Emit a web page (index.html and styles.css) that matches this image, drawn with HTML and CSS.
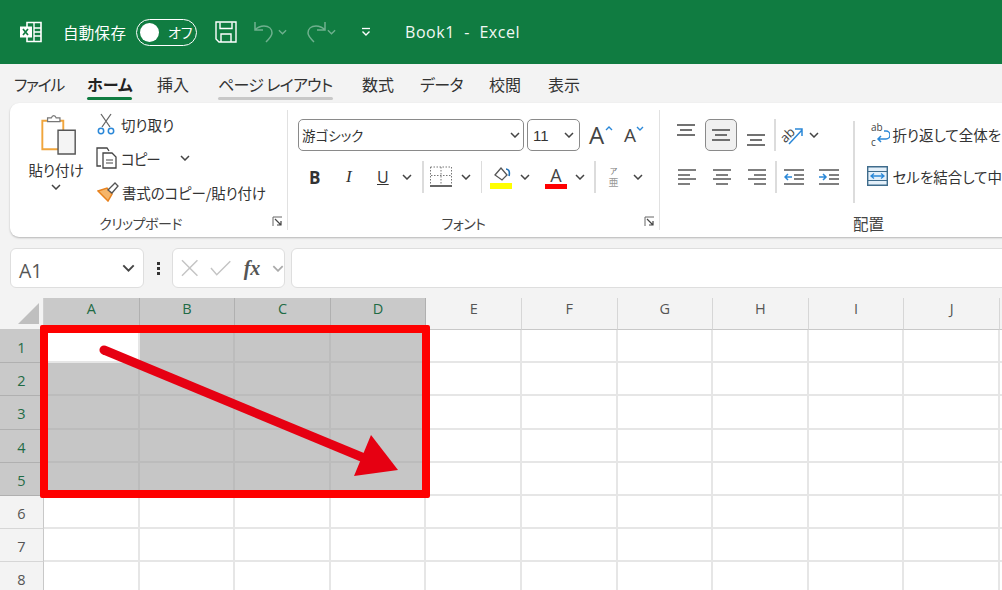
FILE: index.html
```html
<!DOCTYPE html>
<html lang="ja">
<head>
<meta charset="utf-8">
<title>Book1 - Excel</title>
<link rel="stylesheet" href="styles.css">
</head>
<body>
<svg class="defs" width="0" height="0">
  <symbol id="chev" viewBox="0 0 10 6"><path d="M1 1l4 4 4-4" fill="none" stroke="currentColor" stroke-width="1.5"/></symbol>
</svg>
<div class="app">
  <header class="titlebar">
    <svg class="xl" width="24" height="24" viewBox="0 0 24 24"><path d="M8 2.5h14v19H8z" fill="none" stroke="#fff" stroke-width="1.6"/><path d="M15 3v18M15 8h7M15 12h7M15 16h7" stroke="#fff" stroke-width="1.4"/><path d="M1 6.5h12v11H1z" fill="#fff"/><path d="M4 9l5 6M9 9l-5 6" stroke="#107c41" stroke-width="1.7"/></svg>
    <span class="autosave">自動保存</span>
    <span class="toggle"><i class="knob"></i><span>オフ</span></span>
    <svg class="save" width="22" height="22" viewBox="0 0 22 22"><path d="M1 1h20v20H4l-3-3z" fill="none" stroke="#fff" stroke-width="1.4"/><path d="M5 1.5v6h12v-6M6 21v-8h10v8" fill="none" stroke="#fff" stroke-width="1.4"/></svg>
    <svg class="undo" width="22" height="24" viewBox="0 0 22 24"><path d="M2 2v8h8M2 10c3-3 6-4 9-4 5 0 8 3 8 7 0 3-3 6-6 9" fill="none" stroke="#6fb08e" stroke-width="1.5"/></svg>
    <svg class="tchev dim"><use href="#chev"/></svg>
    <svg class="redo" width="22" height="24" viewBox="0 0 22 24"><path d="M20 2v8h-8M20 10c-3-3-6-4-9-4-5 0-8 3-8 7 0 3 3 6 6 9" fill="none" stroke="#6fb08e" stroke-width="1.5"/></svg>
    <svg class="tchev dim"><use href="#chev"/></svg>
    <svg class="qat" width="10" height="10" viewBox="0 0 10 10"><path d="M1 1.5h8" stroke="#fff" stroke-width="1.3"/><path d="M1.5 4.5l3.500 3.500 3.500-3.500" fill="none" stroke="#fff" stroke-width="1.4"/></svg>
    <span class="doc">Book1&nbsp; -&nbsp; Excel</span>
  </header>

  <nav class="tabs">
    <span class="tab t1">ファイル</span>
    <span class="tab t2 active">ホーム</span>
    <span class="tab t3">挿入</span>
    <span class="tab t4 under">ページ レイアウト</span>
    <span class="tab t5">数式</span>
    <span class="tab t6">データ</span>
    <span class="tab t7">校閲</span>
    <span class="tab t8">表示</span>
  </nav>

  <section class="ribbon">
    <div class="group clip">
      <div class="group-body clip-body">
        <div class="paste">
          <svg width="38" height="40" viewBox="0 0 38 42"><path d="M1.500 6h22v30h-22z" fill="#fff" stroke="#f0a53c" stroke-width="2"/><path d="M7 6V3h4c1-3 4-3 5 0h4v4H7z" fill="#fff" stroke="#777" stroke-width="1.300"/><path d="M18 16h18v25H18z" fill="#f4f4f4" stroke="#555" stroke-width="1.500"/></svg>
          <span class="paste-label">貼り付け</span>
          <svg class="chev"><use href="#chev"/></svg>
        </div>
        <div class="clip-rows">
          <div class="clip-row">
            <svg width="18" height="22" viewBox="0 0 18 22"><path d="M4 1l9 13M14 1L5 14" stroke="#666" stroke-width="1.300" fill="none"/><circle cx="4" cy="18" r="2.700" fill="none" stroke="#2b88d8" stroke-width="1.500"/><circle cx="14" cy="18" r="2.700" fill="none" stroke="#2b88d8" stroke-width="1.500"/></svg>
            <span>切り取り</span>
          </div>
          <div class="clip-row copy">
            <svg width="23" height="24" viewBox="0 0 23 24"><path d="M6 20H2V2h10l2 3" fill="none" stroke="#444" stroke-width="1.300"/><path d="M8 7h9l4 4v11H8z" fill="#fff" stroke="#444" stroke-width="1.300"/><path d="M11 14h7M11 17h7" stroke="#444"/></svg>
            <span>コピー</span>
            <svg class="chev"><use href="#chev"/></svg>
          </div>
          <div class="clip-row fmt">
            <svg width="22" height="20" viewBox="0 0 22 20"><path d="M1 9l9-3 5 6-4 7z" fill="#f5b56a" stroke="#e8821e" stroke-width="1.500"/><path d="M11 8l7-7 3 3-6 7z" fill="#fff" stroke="#555" stroke-width="1.300"/></svg>
            <span>書式のコピー/貼り付け</span>
          </div>
        </div>
      </div>
      <div class="group-foot"><span>クリップボード</span><svg class="launch" width="11" height="11" viewBox="0 0 11 11"><path d="M1 10V1h9" fill="none" stroke="#666"/><path d="M3 3l6 6M9 5v4H5" fill="none" stroke="#444" stroke-width="1.200"/></svg></div>
    </div>

    <div class="group font">
      <div class="group-body font-body">
        <div class="font-row1">
          <div class="select fontname"><span>游ゴシック</span><svg class="chev"><use href="#chev"/></svg></div>
          <div class="select fontsize"><span>11</span><svg class="chev"><use href="#chev"/></svg></div>
          <span class="grow">A<svg width="8" height="5" viewBox="0 0 8 5"><path d="M1 4l3-3 3 3" fill="none" stroke="#2b88d8" stroke-width="1.400"/></svg></span>
          <span class="shrink">A<svg width="8" height="5" viewBox="0 0 8 5"><path d="M1 1l3 3 3-3" fill="none" stroke="#2b88d8" stroke-width="1.400"/></svg></span>
        </div>
        <div class="font-row2">
          <b class="fb">B</b>
          <i class="fi">I</i>
          <span class="fu">U</span>
          <svg class="chev c1"><use href="#chev"/></svg>
          <span class="sep s1"></span>
          <svg class="borders" width="22" height="22" viewBox="0 0 22 22"><path d="M.5 1h21M.5 1v17M21.500 1v17M11 1v17M1 9.500h20" fill="none" stroke="#777" stroke-dasharray="1.500 1.500"/><path d="M0 20h22" stroke="#333" stroke-width="1.500"/></svg>
          <svg class="chev c2"><use href="#chev"/></svg>
          <span class="sep s2"></span>
          <svg class="fill" width="22" height="24" viewBox="0 0 22 24"><path d="M5 10l6-7 6 7-5 5z" fill="#fff" stroke="#555" stroke-width="1.300"/><path d="M16 4c3 0 4 3 3 7" fill="none" stroke="#1f6fb5" stroke-width="1.600"/><path d="M0 18h22v6H0z" fill="#ffff00"/></svg>
          <svg class="chev c3"><use href="#chev"/></svg>
          <span class="color"><span>A</span><i></i></span>
          <svg class="chev c4"><use href="#chev"/></svg>
          <span class="sep s3"></span>
          <span class="phon"><small>ア</small><em>亜</em></span>
          <svg class="chev c5"><use href="#chev"/></svg>
        </div>
      </div>
      <div class="group-foot"><span>フォント</span><svg class="launch" width="11" height="11" viewBox="0 0 11 11"><path d="M1 10V1h9" fill="none" stroke="#666"/><path d="M3 3l6 6M9 5v4H5" fill="none" stroke="#444" stroke-width="1.200"/></svg></div>
    </div>

    <div class="group align">
      <div class="group-body align-body">
        <div class="align-left">
          <div class="align-row">
            <span class="ai top"><svg width="18" height="12" viewBox="0 0 18 12"><path d="M0 1h18M3 6h12M0 11h18" stroke="#444" stroke-width="1.300"/></svg></span>
            <span class="ai mid on"><svg width="18" height="12" viewBox="0 0 18 12"><path d="M0 1h18M3 6h12M0 11h18" stroke="#444" stroke-width="1.300"/></svg></span>
            <span class="ai bot"><svg width="18" height="12" viewBox="0 0 18 12"><path d="M0 1h18M3 6h12M0 11h18" stroke="#444" stroke-width="1.300"/></svg></span>
            <span class="sep"></span>
            <span class="ai rot"><svg width="24" height="22" viewBox="0 0 24 22"><text x="0" y="15" class="rot-text" transform="rotate(-45 8 11)">ab</text><path d="M9 20L22 6M15 5h7v7" fill="none" stroke="#2b88d8" stroke-width="1.500"/></svg></span>
            <svg class="chev"><use href="#chev"/></svg>
          </div>
          <div class="align-row row2">
            <span class="ai"><svg width="18" height="16" viewBox="0 0 18 16"><path d="M0 1h18M0 6h12M0 10h18M0 15h12" stroke="#555" stroke-width="1.300"/></svg></span>
            <span class="ai"><svg width="18" height="16" viewBox="0 0 18 16"><path d="M0 1h18M3 6h12M0 10h18M3 15h12" stroke="#555" stroke-width="1.300"/></svg></span>
            <span class="ai"><svg width="18" height="16" viewBox="0 0 18 16"><path d="M0 1h18M6 6h12M0 10h18M6 15h12" stroke="#555" stroke-width="1.300"/></svg></span>
            <span class="sep"></span>
            <span class="ai"><svg width="20" height="16" viewBox="0 0 20 16"><path d="M0 1h20M10 6h10M10 10h10M0 15h20" stroke="#555" stroke-width="1.300"/><path d="M8 8H1M4 5L1 8l3 3" fill="none" stroke="#2b88d8" stroke-width="1.500"/></svg></span>
            <span class="ai"><svg width="20" height="16" viewBox="0 0 20 16"><path d="M0 1h20M10 6h10M10 10h10M0 15h20" stroke="#555" stroke-width="1.300"/><path d="M0 8h7M4 5l3 3-3 3" fill="none" stroke="#2b88d8" stroke-width="1.500"/></svg></span>
          </div>
        </div>
        <span class="vline"></span>
        <div class="wrap">
          <div class="wrap-row w1">
            <svg width="20" height="26" viewBox="0 0 20 26"><text x="1" y="10" class="ab">ab</text><text x="1" y="25" class="ab">c</text><path d="M14 10h2a3 3 0 0 1 0 8H8M11 15l-3 3 3 3" fill="none" stroke="#2b88d8" stroke-width="1.500"/></svg>
            <span>折り返して全体を</span>
          </div>
          <div class="wrap-row w2">
            <svg width="21" height="20" viewBox="0 0 21 20"><path d="M.7.700h19.600v18.600H.7z" fill="#e4f0fa" stroke="#3f6c8c" stroke-width="1.400"/><path d="M1 5.500h19M1 14.500h19" stroke="#3f6c8c"/><path d="M4 10h13M7 7.500L4 10l3 2.500M14 7.500l3 2.500-3 2.500" fill="none" stroke="#2b88d8" stroke-width="1.300"/></svg>
            <span>セルを結合して中</span>
          </div>
        </div>
      </div>
      <div class="group-foot"><span>配置</span></div>
    </div>
  </section>

  <section class="formula">
    <div class="namebox"><span>A1</span><svg class="chev"><use href="#chev"/></svg></div>
    <span class="dots"><i></i><i></i><i></i></span>
    <div class="fxbox">
      <svg width="18" height="18" viewBox="0 0 18 18"><path d="M1 1l16 16M17 1L1 17" stroke="#c4c4c4" stroke-width="1.500"/></svg>
      <svg width="22" height="16" viewBox="0 0 22 16"><path d="M1 8l6 7L21 1" fill="none" stroke="#c4c4c4" stroke-width="1.500"/></svg>
      <span class="fx">fx</span>
      <svg class="chev"><use href="#chev"/></svg>
    </div>
    <div class="input"></div>
  </section>

  <section class="sheet">
    <div class="grid">
      <div class="corner"><span></span></div>
      <div class="ch sel">A</div><div class="ch sel">B</div><div class="ch sel">C</div><div class="ch sel">D</div><div class="ch">E</div><div class="ch">F</div><div class="ch">G</div><div class="ch">H</div><div class="ch">I</div><div class="ch">J</div><div class="ch"></div>

      <div class="rh sel">1</div><div class="c"></div><div class="c s"></div><div class="c s"></div><div class="c s"></div><div class="c"></div><div class="c"></div><div class="c"></div><div class="c"></div><div class="c"></div><div class="c"></div><div class="c"></div>
      <div class="rh sel">2</div><div class="c s"></div><div class="c s"></div><div class="c s"></div><div class="c s"></div><div class="c"></div><div class="c"></div><div class="c"></div><div class="c"></div><div class="c"></div><div class="c"></div><div class="c"></div>
      <div class="rh sel">3</div><div class="c s"></div><div class="c s"></div><div class="c s"></div><div class="c s"></div><div class="c"></div><div class="c"></div><div class="c"></div><div class="c"></div><div class="c"></div><div class="c"></div><div class="c"></div>
      <div class="rh sel">4</div><div class="c s"></div><div class="c s"></div><div class="c s"></div><div class="c s"></div><div class="c"></div><div class="c"></div><div class="c"></div><div class="c"></div><div class="c"></div><div class="c"></div><div class="c"></div>
      <div class="rh sel">5</div><div class="c s"></div><div class="c s"></div><div class="c s"></div><div class="c s"></div><div class="c"></div><div class="c"></div><div class="c"></div><div class="c"></div><div class="c"></div><div class="c"></div><div class="c"></div>
      <div class="rh">6</div><div class="c"></div><div class="c"></div><div class="c"></div><div class="c"></div><div class="c"></div><div class="c"></div><div class="c"></div><div class="c"></div><div class="c"></div><div class="c"></div><div class="c"></div>
      <div class="rh">7</div><div class="c"></div><div class="c"></div><div class="c"></div><div class="c"></div><div class="c"></div><div class="c"></div><div class="c"></div><div class="c"></div><div class="c"></div><div class="c"></div><div class="c"></div>
      <div class="rh">8</div><div class="c"></div><div class="c"></div><div class="c"></div><div class="c"></div><div class="c"></div><div class="c"></div><div class="c"></div><div class="c"></div><div class="c"></div><div class="c"></div><div class="c"></div>
    </div>
    <div class="frame"></div>
    <svg class="arrow" width="1002" height="292" viewBox="0 0 1002 292"><path d="M104 52L364 160" stroke="#e60012" stroke-width="9" stroke-linecap="round"/><path d="M371 137L398 172L354 178z" fill="#e60012"/></svg>
  </section>
</div>
</body>
</html>
```
FILE: styles.css
```css
* { box-sizing: border-box; }
html, body { margin: 0; padding: 0; background: #f3f3f3; }
body { font-family: "Noto Sans CJK JP", "Noto Sans", sans-serif; color: #333; overflow: hidden; font-feature-settings: "palt"; }
.defs { position: absolute; }
.app { width: 1002px; height: 590px; overflow: hidden; display: flex; flex-direction: column; }
.chev { width: 10px; height: 6px; color: #444; flex: none; }

/* title bar */
.titlebar { height: 64px; flex: none; background: #107c41; color: #fff; display: flex; align-items: center; padding-left: 19px; }
.xl { margin-right: 20px; }
.autosave { font-size: 15.500px; letter-spacing: .3px; width: 64px; white-space: nowrap; margin-right: 9px; }
.toggle { width: 61px; height: 27px; border: 1.500px solid #fff; border-radius: 14px; display: flex; align-items: center; padding-left: 3px; font-size: 14px; gap: 9px; }
.knob { width: 19px; height: 19px; border-radius: 50%; background: #fff; flex: none; }
.save { margin-left: 18px; margin-right: 16px; }
.undo { margin-right: 3px; }
.tchev { width: 9px; height: 6px; margin-right: 18px; }
.dim { color: #6fb08e; }
.qat { margin-left: 7px; margin-right: 34px; }
.doc { font-family: "Open Sans", "Noto Sans", sans-serif; font-size: 16px; letter-spacing: .55px; color: #f2f8f4; white-space: nowrap; }

/* tabs */
.tabs { height: 39px; flex: none; display: flex; align-items: flex-start; padding: 8px 0 0 14px; font-size: 16px; color: #333; }
.tab { line-height: 24px; white-space: nowrap; position: relative; flex: none; }
.t1 { width: 73px; letter-spacing: -1.400px; }
.t2 { width: 70px; font-weight: 700; color: #222; }
.t3 { width: 61px; }
.t4 { width: 144px; letter-spacing: -.7px; }
.t5 { width: 58px; }
.t6 { width: 69px; letter-spacing: -.6px; }
.t7 { width: 59px; }
.active::after, .under::after { content: ""; position: absolute; left: 0; height: 3px; bottom: -4px; border-radius: 2px; background: #107c41; width: 45px; }
.under::after { background: #c8c8c8; left: 0; width: 115px; }

/* ribbon */
.ribbon { height: 134px; flex: none; margin-left: 10px; width: 1040px; background: #fff; border-radius: 9px 0 0 9px; box-shadow: 0 1px 2px rgba(0,0,0,.25); display: flex; font-size: 14px; padding-top: 7px; }
.group { display: flex; flex-direction: column; flex: none; height: 120px; border-right: 1.500px solid #e1e1e1; position: relative; }
.group-body { flex: 1; }
.group-foot { height: 20px; margin-bottom: -3px; font-size: 14px; letter-spacing: -.5px; color: #444; text-align: center; position: relative; line-height: 20px; white-space: nowrap; }
.launch { position: absolute; right: 4px; top: 3px; }
.clip { width: 278px; }
.font { width: 372px; }
.align { width: 400px; border-right: none; }
.clip .group-foot { padding-right: 16px; }
.font .group-foot { padding-right: 20px; }
.clip-body { display: flex; padding-left: 18px; }
.paste { width: 56px; display: flex; flex-direction: column; align-items: center; padding-top: 5px; }
.paste svg:first-child { margin-left: 5px; }
.paste-label { font-size: 14.500px; margin-top: 1px; line-height: 28px; white-space: nowrap; }
.paste .chev { margin-top: 0; }
.clip-rows { padding-left: 13px; padding-top: 2px; display: flex; flex-direction: column; gap: 10px; }
.clip-row { display: flex; align-items: center; height: 24px; gap: 6px; white-space: nowrap; font-size: 14.500px; }
.clip-row.copy { gap: 3px; margin-left: -2px; letter-spacing: -1px; }
.clip-row.copy .chev { margin-left: 17px; }
.clip-row.fmt { gap: 3px; letter-spacing: -.15px; }

.font-body { padding-left: 10px; padding-top: 9px; }
.font-row1 { display: flex; align-items: center; height: 32px; }
.select { height: 32px; border: 1px solid #8a8a8a; border-radius: 5px; display: flex; align-items: center; justify-content: space-between; padding: 0 3px; font-size: 13.500px; }
.fontname { width: 226px; margin-right: 3px; }
.fontsize { width: 53px; padding: 0 5px; font-size: 15px; font-family: "Liberation Sans", sans-serif; }
.grow, .shrink { font-family: "Open Sans", sans-serif; position: relative; color: #444; line-height: 1; }
.grow { font-size: 24px; margin-left: 9px; width: 35px; }
.shrink { font-size: 19px; }
.grow svg, .shrink svg { position: absolute; top: 3px; left: 16px; }
.shrink svg { left: 12px; top: 0; }
.font-row2 { display: flex; align-items: center; height: 32px; margin-top: 10px; position: relative; }
.fb { font: 700 17px "Open Sans", sans-serif; margin-left: 11px; width: 34px; }
.fi { font: italic 400 17px "Liberation Serif", serif; width: 33px; padding-left: 3px; }
.fu { font: 400 16px "Open Sans", sans-serif; text-decoration: underline; width: 26px; padding-left: 1px; }
.sep { width: 1.500px; height: 32px; background: #dcdcdc; flex: none; }
.c1 { margin-right: 10px; }
.s1 { margin-right: 6px; }
.c2 { margin-left: 9px; margin-right: 10px; }
.s2 { margin-right: 8px; }
.c3 { margin-left: 8px; margin-right: 15px; }
.color { width: 22px; display: flex; flex-direction: column; align-items: center; font: 400 18px/18px "Open Sans", sans-serif; color: #444; }
.color i { width: 22px; height: 5px; background: #ff0000; display: block; }
.c4 { margin-left: 8px; margin-right: 9px; }
.s3 { margin-right: 11px; }
.phon { width: 14px; display: flex; flex-direction: column; align-items: center; gap: 1px; color: #777; }
.phon small { font-size: 8px; line-height: 8px; }
.phon em { font-style: normal; font-size: 10px; line-height: 11px; color: #999; }
.c5 { margin-left: 12px; }

.align-body { display: flex; padding-left: 9px; padding-top: 8px; }
.align-left { width: 184px; }
.align-row { display: flex; align-items: center; height: 33px; }
.ai { width: 35px; display: flex; align-items: center; justify-content: center; flex: none; }
.align-row .sep { margin: 0 2px 0 1px; }
.row2 .sep { margin: 0 0 0 1px; }
.top svg { margin-bottom: 10px; }
.bot svg { margin-top: 10px; }
.mid.on { width: 32px; height: 32px; margin: 0 2px; background: #f0f0f0; border: 1.500px solid #8a8a8a; border-radius: 5px; }
.top, .bot { width: 34px; }
.rot { width: 28px; }
.align-row > .chev { margin-left: 3px; }
.rot-text { font: 400 13px "Open Sans", sans-serif; fill: #444; }
.row2 { margin-top: 9px; }
.vline { width: 1.500px; height: 82px; background: #dcdcdc; margin-top: 3px; flex: none; }
.wrap { padding-left: 12px; padding-top: 3px; }
.wrap-row { display: flex; align-items: center; gap: 5px; white-space: nowrap; height: 26px; font-size: 14.500px; }
.w1 { margin-bottom: 16px; padding-left: 3px; gap: 3px; }
.w2 { gap: 5px; }
.ab { font: 400 10px "Open Sans", sans-serif; fill: #444; }
.align .group-foot { text-align: left; padding-left: 193px; font-size: 15.500px; letter-spacing: 0; }

/* formula bar */
.formula { height: 40px; flex: none; margin-top: 11px; display: flex; align-items: stretch; padding-left: 10px; }
.namebox { width: 134px; background: #fff; border: 1px solid #dedede; border-radius: 6px; display: flex; align-items: center; justify-content: space-between; padding: 4px 8px 0; font: 400 19.500px "Open Sans", sans-serif; color: #555; }
.namebox .chev { width: 13px; height: 8px; margin-top: -4px; }
.dots { width: 28px; display: flex; flex-direction: column; gap: 2px; align-items: center; justify-content: center; flex: none; }
.dots i { width: 3px; height: 3px; background: #333; }
.fxbox { width: 113px; background: #fff; border: 1px solid #dedede; border-radius: 6px; display: flex; align-items: center; padding-left: 8px; gap: 12px; }
.fx { font: italic 700 20px "Liberation Serif", serif; color: #555; width: 20px; }
.fxbox .chev { margin-left: -3px; color: #aaa; width: 12px; height: 7px; }
.input { flex: 1; margin-left: 6px; background: #fff; border: 1px solid #dedede; border-radius: 6px 0 0 6px; margin-right: -10px; }

/* sheet */
.sheet { flex: none; margin-top: 10px; height: 292px; position: relative; overflow: hidden; background: #fff; }
.grid { display: grid; grid-template-columns: 44px repeat(10, 95.600px) 10px; grid-template-rows: 32px repeat(7, 33.200px) 40px; width: 1100px; }
.corner { background: #f3f3f3; border-right: 1px solid #d0d0d0; border-bottom: 1px solid #c8c8c8; position: relative; }
.corner span { position: absolute; right: 4px; bottom: 5px; width: 0; height: 0; border-left: 21px solid transparent; border-bottom: 21px solid #bfbfbf; }
.ch { background: #f3f3f3; color: #555; border-right: 1.500px solid #d6d6d6; border-bottom: 1.500px solid #c8c8c8; font: 400 14.500px/22px "Open Sans", sans-serif; text-align: center; }
.rh { background: #f3f3f3; color: #555; border-bottom: 1.500px solid #d6d6d6; border-right: 1px solid #c8c8c8; font: 400 14.500px/35px "Open Sans", sans-serif; text-align: center; }
.ch.sel, .rh.sel { background: #c9c9c9; color: #1f6b45; border-color: #b0b0b0; }
.c { border-right: 2px solid #e6e6e6; border-bottom: 2px solid #e6e6e6; }
.c.s { background: #c6c6c6; border-color: #bcbcbc; }
.frame { position: absolute; left: 40px; top: 27px; width: 390px; height: 173px; border: 8px solid #fe0000; border-radius: 2px; }
.arrow { position: absolute; left: 0; top: 0; }
```
